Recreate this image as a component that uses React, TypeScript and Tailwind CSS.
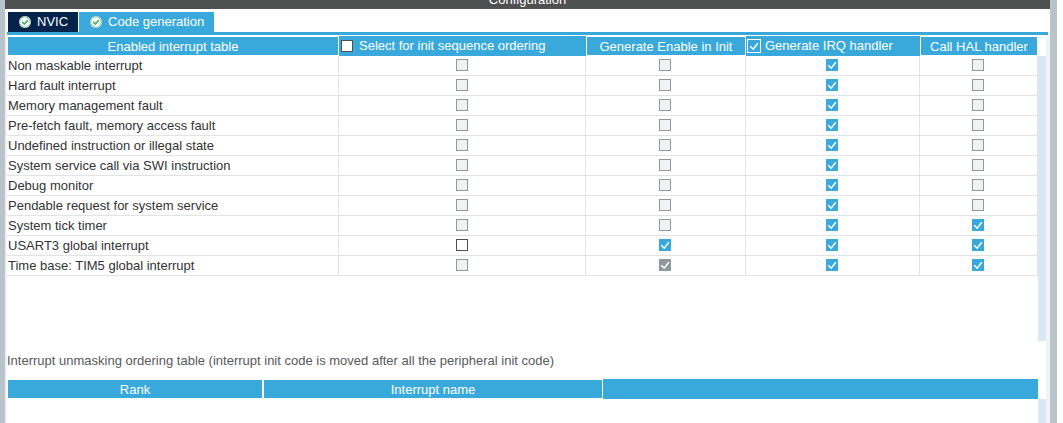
import React from "react";

type Cell = "off" | "on" | "open" | "locked";

const rows: { name: string; cells: Cell[] }[] = [
  { name: "Non maskable interrupt", cells: ["off", "off", "on", "off"] },
  { name: "Hard fault interrupt", cells: ["off", "off", "on", "off"] },
  { name: "Memory management fault", cells: ["off", "off", "on", "off"] },
  { name: "Pre-fetch fault, memory access fault", cells: ["off", "off", "on", "off"] },
  { name: "Undefined instruction or illegal state", cells: ["off", "off", "on", "off"] },
  { name: "System service call via SWI instruction", cells: ["off", "off", "on", "off"] },
  { name: "Debug monitor", cells: ["off", "off", "on", "off"] },
  { name: "Pendable request for system service", cells: ["off", "off", "on", "off"] },
  { name: "System tick timer", cells: ["off", "off", "on", "on"] },
  { name: "USART3 global interrupt", cells: ["open", "on", "on", "on"] },
  { name: "Time base: TIM5 global interrupt", cells: ["off", "locked", "on", "on"] },
];

const columns = [
  "Select for init sequence ordering",
  "Generate Enable in Init",
  "Generate IRQ handler",
  "Call HAL handler",
];

function Check({ state, label }: { state: Cell; label: string }) {
  return (
    <span className="grid size-3 place-items-center">
      <input
        type="checkbox"
        aria-label={label}
        defaultChecked={state === "on" || state === "locked"}
        disabled={state === "off" || state === "locked"}
        className="peer col-start-1 row-start-1 size-3 appearance-none border border-[#4d4f50] bg-white checked:border-[#39a9dc] checked:bg-[#39a9dc] disabled:border-[#8f989e] disabled:bg-[#f0f2f5] disabled:checked:border-[#8f989e] disabled:checked:bg-[#8f989e]"
      />
      <Tick />
    </span>
  );
}

function Tick() {
  return (
    <svg
      viewBox="0 0 12 12"
      className="pointer-events-none col-start-1 row-start-1 hidden size-3 peer-checked:block"
      fill="none"
      stroke="#fff"
      strokeWidth="1.5"
    >
      <path d="M2.2 6.2 L5.2 9.2 L9.8 3.2" />
    </svg>
  );
}

function OkIcon() {
  return (
    <svg viewBox="0 0 12 12" className="size-3" fill="none">
      <circle cx="6" cy="6" r="6" fill="#fff" />
      <circle cx="6" cy="6" r="5.3" stroke="#7cc494" strokeWidth="1" />
      <path d="M3.2 5.8 L5.4 8 L9 4.2" stroke="#4caf6e" strokeWidth="1.7" />
    </svg>
  );
}

function Tab({ label, active }: { label: string; active?: boolean }) {
  return (
    <button
      type="button"
      role="tab"
      aria-selected={!!active}
      className={
        active
          ? "flex h-5 items-center gap-[6px] bg-[#39a9dc] pr-[10px] pl-[11px] text-white"
          : "flex h-5 items-center gap-[6px] bg-[#03234b] pr-[10px] pl-[11px] text-white"
      }
    >
      <OkIcon />
      <span>{label}</span>
    </button>
  );
}

const plainHead = "border border-white bg-[#39a9dc] p-0 pt-px text-center font-normal leading-[17px] text-white";
const fullHead = "bg-[#39a9dc] p-0 font-normal leading-5 text-white";

export default function App() {
  return (
    <div className="flex min-h-screen bg-white font-['Liberation_Sans',Arial,sans-serif] text-[13px] leading-5 text-[#333]">
      <div className="w-[5px] bg-[#b8c4ca]" />
      <main className="flex min-w-0 flex-1 flex-col">
        <header className="flex h-[9px] items-end justify-center overflow-hidden bg-[#4f5150] pb-px text-white">
          <h1 className="leading-4">Configuration</h1>
        </header>
        <div className="flex flex-1 flex-col border-l-2 border-[#f0f0f0] pt-[3px]">
          <div role="tablist" className="mr-[2px] flex gap-px border-b-[3px] border-[#39a9dc] pl-px">
            <Tab label="NVIC" />
            <Tab label="Code generation" active />
          </div>
          <div className="flex flex-1 flex-col border-r-4 border-[#f0f2f3] pt-px">
            <section className="flex min-h-[305px]">
              <div className="min-w-0 flex-1">
                <table className="w-full table-fixed border-separate border-spacing-0">
                  <colgroup>
                    <col className="w-[332px]" />
                    <col className="w-[247px]" />
                    <col className="w-[160px]" />
                    <col className="w-[174px]" />
                    <col className="w-[118px]" />
                  </colgroup>
                  <thead>
                    <tr className="h-5">
                      <th className={plainHead}>Enabled interrupt table</th>
                      <th className={fullHead}>
                        <label className="flex items-center gap-[6px] pl-[2px]">
                          <input type="checkbox" className="size-3 appearance-none border border-[#4d4f50] bg-white" />
                          Select for init sequence ordering
                        </label>
                      </th>
                      <th className={plainHead}>Generate Enable in Init</th>
                      <th className={fullHead}>
                        <label className="flex items-center gap-1 pl-px">
                          <span className="grid size-[14px] place-items-center">
                            <input
                              type="checkbox"
                              defaultChecked
                              className="peer col-start-1 row-start-1 size-[14px] appearance-none border border-white bg-[#39a9dc]"
                            />
                            <Tick />
                          </span>
                          Generate IRQ handler
                        </label>
                      </th>
                      <th className={plainHead}>Call HAL handler</th>
                    </tr>
                  </thead>
                  <tbody>
                    {rows.map((row) => (
                      <tr key={row.name} className="h-5">
                        <td className="border-r border-b border-[#e2e3e4] p-0 pl-px leading-[19px]">{row.name}</td>
                        {row.cells.map((state, i) => (
                          <td key={columns[i]} className="border-r border-b border-[#e2e3e4] p-0 pr-px align-top">
                            <div className="flex h-[18px] items-center justify-center">
                              <Check state={state} label={`${columns[i]}: ${row.name}`} />
                            </div>
                          </td>
                        ))}
                      </tr>
                    ))}
                  </tbody>
                </table>
              </div>
              <div className="mt-5 w-2 bg-[#d9e8f5]" />
            </section>
            <p className="mt-[10px] text-[#58595b]">
              Interrupt unmasking ordering table (interrupt init code is moved after all the peripheral init code)
            </p>
            <section className="mt-2 flex flex-1">
              <div className="min-w-0 flex-1">
                <table className="w-full table-fixed border-separate border-spacing-0">
                  <colgroup>
                    <col className="w-[256px]" />
                    <col className="w-[340px]" />
                    <col className="w-[435px]" />
                  </colgroup>
                  <thead>
                    <tr className="h-5">
                      <th className={plainHead}>Rank</th>
                      <th className={plainHead}>Interrupt name</th>
                      <td className="bg-[#39a9dc] p-0" />
                    </tr>
                  </thead>
                </table>
              </div>
              <div className="mt-5 w-2 bg-[#d9e8f5]" />
            </section>
          </div>
        </div>
      </main>
      <div className="mr-[6px] w-[7px] bg-[#b8c4ca]" />
    </div>
  );
}
